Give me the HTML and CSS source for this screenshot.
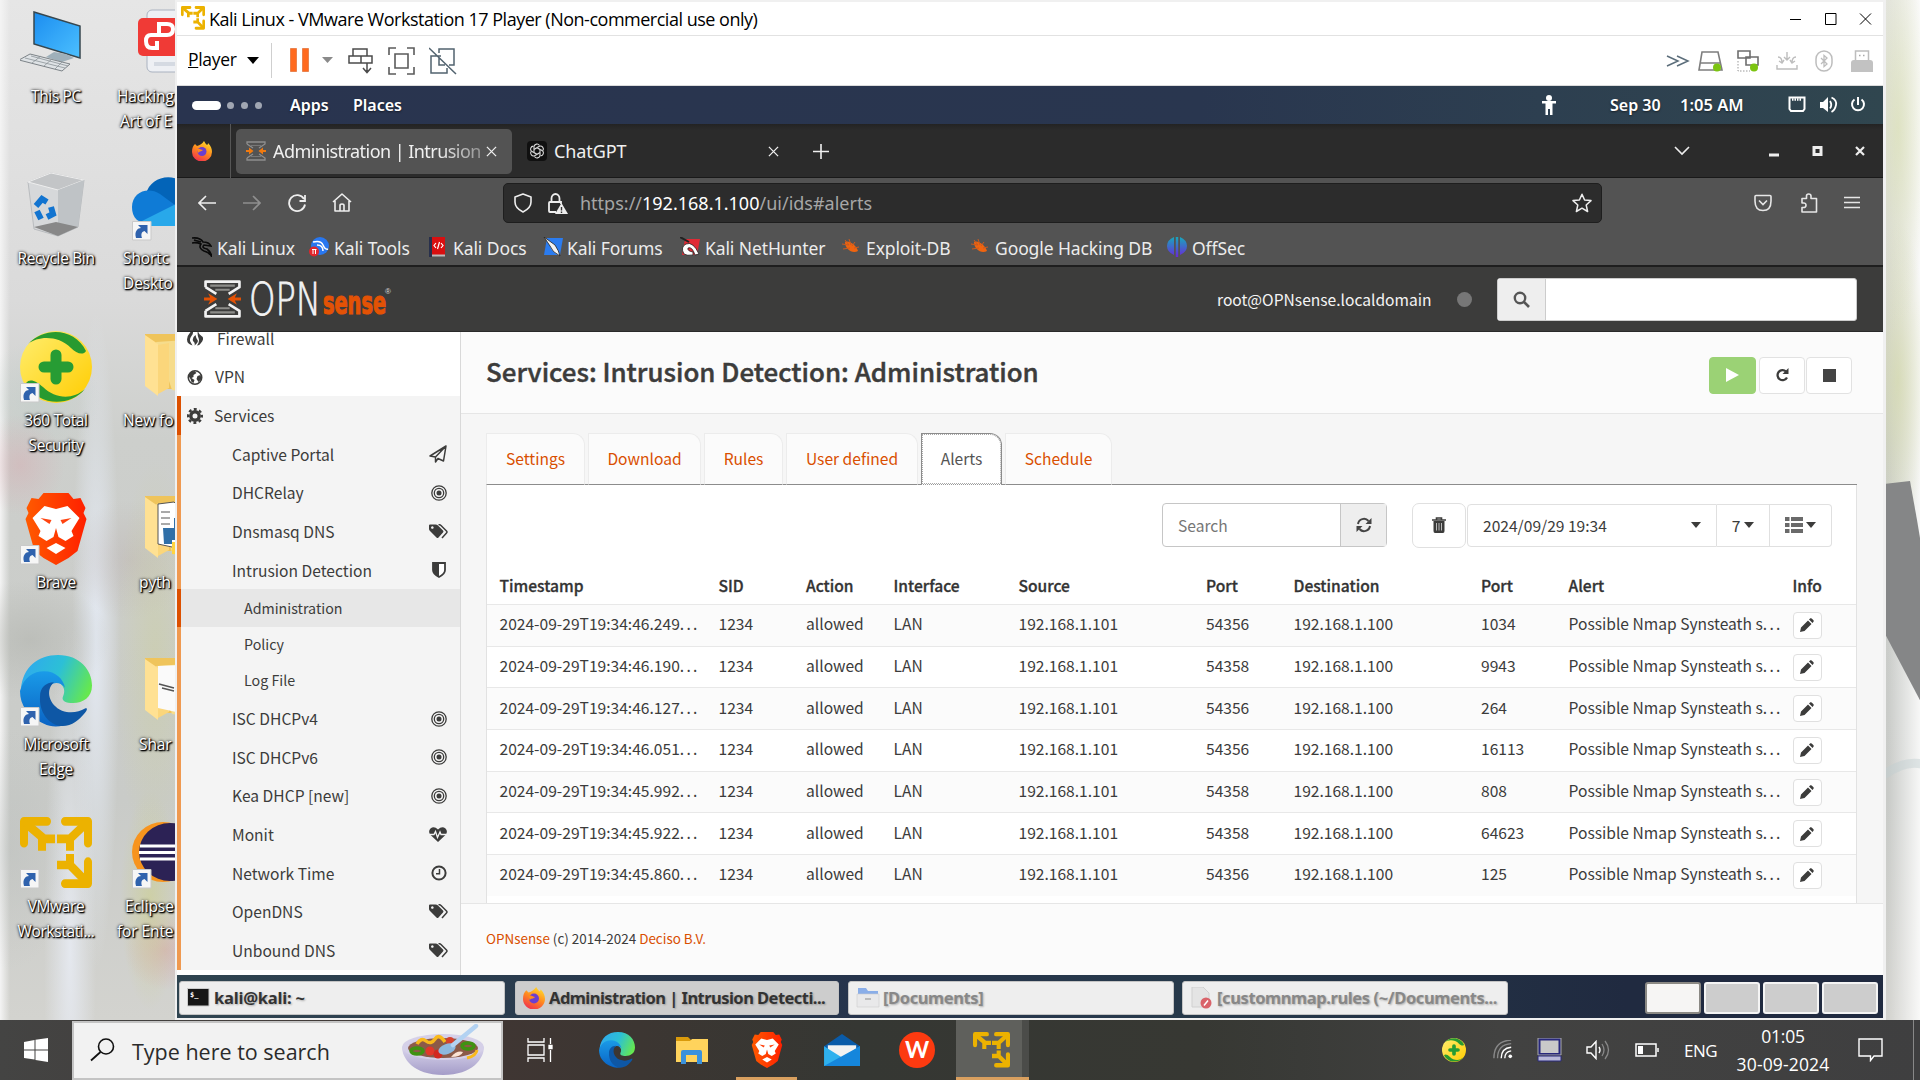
FILE: index.html
```html
<!DOCTYPE html>
<html lang="en">
<head>
<meta charset="utf-8">
<title>Administration | Intrusion Detection | Services</title>
<link rel="stylesheet" href="styles.css">
</head>
<body>
<svg class="defs" width="0" height="0">
  <defs>
    <linearGradient id="gBlue" x1="0" y1="0" x2="1" y2="1"><stop offset="0" stop-color="#1b8df0"/><stop offset="1" stop-color="#4cc0ff"/></linearGradient>
    <linearGradient id="gEdgeTop" x1="0" y1="0.3" x2="1" y2="0.6"><stop offset="0" stop-color="#2fa9ee"/><stop offset=".5" stop-color="#2cc0d6"/><stop offset="1" stop-color="#66e84e"/></linearGradient>
    <linearGradient id="gEdgeL" x1="0" y1="0" x2="0" y2="1"><stop offset="0" stop-color="#1a9be8"/><stop offset="1" stop-color="#0a63c4"/></linearGradient>
    <linearGradient id="gBrave" x1="0" y1="0" x2="1" y2="0"><stop offset="0" stop-color="#ff5a00"/><stop offset="1" stop-color="#ff2000"/></linearGradient>
    <linearGradient id="gYel" x1="0" y1="0" x2="1" y2="1"><stop offset="0" stop-color="#ffee70"/><stop offset="1" stop-color="#ffcc00"/></linearGradient>
    <linearGradient id="gBowl" x1="0" y1="0" x2="0" y2="1"><stop offset="0" stop-color="#d9d5ec"/><stop offset="1" stop-color="#a49cc8"/></linearGradient>
    <linearGradient id="gOff" x1="0" y1="0" x2="0" y2="1"><stop offset="0" stop-color="#18a8bc"/><stop offset="1" stop-color="#6a28d8"/></linearGradient>
    <linearGradient id="gFox" x1=".8" y1="0" x2=".3" y2="1"><stop offset="0" stop-color="#ffe02e"/><stop offset=".5" stop-color="#ff8a1e"/><stop offset="1" stop-color="#f0304e"/></linearGradient>
  </defs>
  <symbol id="vmware" viewBox="0 0 72 66" preserveAspectRatio="none"><g fill="none" stroke="#ecb200" stroke-width="8" stroke-linecap="round" stroke-linejoin="round"><path d="M27 4H4V24M45 4H68V24M68 41V61H45"/><g stroke-linecap="butt"><path d="M6 6L24 20H35M22 18V31M66 6L50 20H37M50 18V31M66 59L50 44V34M37 44H50"/></g></g></symbol>
  <symbol id="edge" viewBox="0 0 72 66" preserveAspectRatio="none"><path d="M1 31C3 11 18 0 38 0 60 0 72 14 72 28 72 39 63 44 53 44 46 44 41 42 43 38 45 34 45 30 40 26 30 18 10 18 1 31z" fill="url(#gEdgeTop)"/><path d="M0 33C4 20 14 15 24 15 36 15 43 22 45 30 38 22 27 26 27 36 26 50 38 60 50 62 43 66 32 67 24 63 8 57 0 46 0 33z" fill="url(#gEdgeL)"/><path d="M20 38C20 30 26 25 34 25 25 32 29 46 42 51 51 54 59 52 65 49 68 48 67 51 65 53 59 60 51 66 40 65 28 63 19 52 20 38z" fill="#0e57a5"/></symbol>
  <symbol id="brave" viewBox="0 0 61 72"><path d="M18 0H43L48 6 55 5 60 15 58 20 61 26 52 58 43 65 30.500 72 18 65 9 58 0 26 3 20 1 15 6 5 13 6z" fill="url(#gBrave)"/><path d="M30.500 16L42 13 54 25 46 38 48 43 40 48 33 44 30.500 35 28 44 21 48 13 43 15 38 7 25 19 13zM30.500 50L40 55 30.500 61 21 55z" fill="#fff"/><path d="M15 25L26 27 24 31zM46 25L35 27 37 31z" fill="#ff4410"/></symbol>
  <symbol id="total" viewBox="0 0 72 72"><circle cx="36" cy="36" r="36" fill="url(#gYel)"/><path d="M8 13C25-5 55-3 66 20 63 25 56 22 51 17 38 4 18 5 8 13zM65 58C50 76 18 76 6 52 10 47 16 50 23 56 35 68 53 69 65 58z" fill="#289a30"/><path d="M36 24V48M24 36H48" stroke="#279c34" stroke-width="11" stroke-linecap="round"/></symbol>
  <symbol id="folder" viewBox="0 0 72 66"><path d="M3 0H72V55H22L3 50z" fill="#efc45b"/><path d="M14 8L72 4V62L30 56z" fill="#f6dc8c"/><path d="M3 1L16 10V62L3 52z" fill="#ffe193"/><path d="M16 11L27 9V54L16 60z" fill="#fbd67b"/></symbol>
  <symbol id="shortcut" viewBox="0 0 20 20"><path d="M.5.500h18.500v18.500H.5z" fill="#f6f6f6" stroke="#c9c9c9"/><path d="M4 17C2 10 6 7 9 7L6 4H15.500V13L12.500 10C9 11 9 14 10 17z" fill="#2f62ad"/></symbol>
  <symbol id="firefox" viewBox="0 0 20 20"><path d="M12 0C13 2 14 3 15 4 16 3 16 3 16 2 19 5 20 8 20 11A10 9.500 0 0 1 0 11C0 7 1 5 3 3L5 5C8 4 10 3 12 0z" fill="url(#gFox)"/><circle cx="10" cy="10.500" r="4.500" fill="#6a3fd0"/><path d="M5 8C8 7 9 9 11 9 9 11 7 10 6 12z" fill="#ff8a1e"/></symbol>
  <symbol id="bug" viewBox="0 0 20 20"><path d="M4 5C8 3 15 8 17 14 11 17 4 12 4 5z" fill="#f0640f"/><path d="M1 7L8 8M2 12L9 11M8 2L10 8M14 5L11 9M18 10L13 11M4 3L8 8" stroke="#c95a20" stroke-width="1"/></symbol>
  <symbol id="opn" viewBox="0 0 36 37"><g fill="none" stroke="#f2f2f2" stroke-width="2.600" stroke-linejoin="round"><path d="M1.500 7V1.500H34.500V7L24 13.500M1.500 7L12 13.500M1.500 30V35.500H34.500V30L24 23.500M1.500 30L12 23.500"/><path d="M6 5.500H30M11 9.500H25M11 27.500H25M6 31.500H30" stroke="#8d8d8a" stroke-width="2"/></g><path d="M0 17H6L4 13 13 18.500 4 24 6 20H0zM36 17H30L32 13 23 18.500 32 24 30 20H36z" fill="#e35205"/></symbol>
  <symbol id="opnfav" viewBox="0 0 20 20"><path d="M1 3V1H19V3L13 7M1 3L7 7M1 17V19H19V17L13 13M1 17L7 13" fill="none" stroke="#8f8f8f" stroke-width="1.300"/><path d="M5 4.500H15M5 15.500H15" stroke="#777"/><path d="M0 9H3V6.500L7.500 10 3 13.500V11H0zM20 9H17V6.500L12.500 10 17 13.500V11H20z" fill="#f07a10"/></symbol>
  <symbol id="target" viewBox="0 0 16 16"><g fill="none" stroke="#3c3c3b" stroke-width="1.300"><circle cx="8" cy="8" r="7.200"/><circle cx="8" cy="8" r="4.700"/></g><circle cx="8" cy="8" r="2.500" fill="#3c3c3b"/></symbol>
  <symbol id="tags" viewBox="0 0 19 15"><path d="M0 1.500Q0 .5 1 .5H6.500Q8 .5 9 1.500L14 6.500Q15 7.500 14 8.500L9.500 13.500Q8.500 14.500 7.500 13.500L1 7Q0 6 0 5zM3.300 2.200A1.300 1.300 0 1 0 3.400 2.200z" fill="#3c3c3b" fill-rule="evenodd"/><path d="M9.500.5Q11 .5 12 1.500L17.500 7Q18.500 8 17.500 9L13 14" fill="none" stroke="#3c3c3b" stroke-width="1.500"/></symbol>
  <symbol id="pencil" viewBox="0 0 14 14"><path d="M0 14L1 9.500 8 2.500 11.500 6 4.500 13zM9 1.500L10.300.3Q11 0 11.700.5L13.500 2.300Q14 3 13.500 3.700L12.500 5z" fill="#3c3c3b"/></symbol>
  <symbol id="close" viewBox="0 0 12 12"><path d="M1 1L11 11M11 1L1 11" stroke="#f0f0f0" stroke-width="1.400"/></symbol>
</svg>

<main class="desktop">
  <section class="icons">
    <div class="column">
      <figure class="shortcut-tile">
        <svg class="art" viewBox="0 0 72 66"><path d="M14 2L60 16V48L14 34z" fill="url(#gBlue)" stroke="#37474f" stroke-width="1.500"/><path d="M34 42L46 44 54 48 42 52 26 47z" fill="#9fb0ba"/><path d="M10 44L50 54 42 61-1 50z" fill="#dfe3e6" stroke="#7d8388"/><path d="M5 48L45 58M11 46L48 56M12 53L21 46M24 56L32 49M35 59L42 52" stroke="#8c9398" stroke-width=".8"/></svg>
        <figcaption>This PC</figcaption>
      </figure>
      <figure class="shortcut-tile">
        <svg class="art" viewBox="0 0 72 66"><path d="M8 10L31 1 64 8 58 55 38 64 14 57z" fill="#d6d8da" stroke="#b9bcbf"/><path d="M8 10L38 18 64 8 31 1z" fill="#c3c5c7" stroke="#eee"/><path d="M38 18L64 8 58 55 38 64z" fill="#bfc3c6"/><path d="M14 55L36 50 58 55 38 64z" fill="#888"/><path d="M16 34L22 27 27 30M31 35L33 42 27 45M21 47L17 39" stroke="#1274d0" stroke-width="6" fill="none"/></svg>
        <figcaption>Recycle Bin</figcaption>
      </figure>
      <figure class="shortcut-tile">
        <svg class="art"><use href="#total"/></svg><svg class="arrow"><use href="#shortcut"/></svg>
        <figcaption>360 Total<br>Security</figcaption>
      </figure>
      <figure class="shortcut-tile">
        <svg class="art"><use href="#brave"/></svg><svg class="arrow"><use href="#shortcut"/></svg>
        <figcaption>Brave</figcaption>
      </figure>
      <figure class="shortcut-tile">
        <svg class="art"><use href="#edge"/></svg><svg class="arrow"><use href="#shortcut"/></svg>
        <figcaption>Microsoft<br>Edge</figcaption>
      </figure>
      <figure class="shortcut-tile">
        <svg class="art"><use href="#vmware"/></svg><svg class="arrow"><use href="#shortcut"/></svg>
        <figcaption>VMware<br>Workstati...</figcaption>
      </figure>
    </div>
    <div class="column second">
      <figure class="shortcut-tile">
        <svg class="art" viewBox="0 0 72 66"><rect x="15" y="0" width="60" height="62" rx="5" fill="#eef0f4" stroke="#aab2c0"/><rect x="6" y="8" width="60" height="38" rx="5" fill="#f03a36"/><path d="M26 24V14H34Q40 14 40 19Q40 25 34 25H18Q13 25 13 31Q13 38 19 38H24V31" transform="translate(1)" fill="none" stroke="#fff" stroke-width="4"/><path d="M22 54H60" stroke="#d5dae2" stroke-width="4"/></svg>
        <figcaption class="c-pdf">Hacking<br>Art of E</figcaption>
      </figure>
      <figure class="shortcut-tile">
        <svg class="art" viewBox="0 0 72 66"><path d="M14 22C18 4 44-2 56 16L72 20V46H18z" fill="#0364b8"/><path d="M0 35C0 20 16 14 28 22L50 38 20 52C6 52 0 46 0 35z" fill="#0f7bd6"/><path d="M8 50L44 32 72 24V54H16z" fill="#28a8ea"/></svg><svg class="arrow"><use href="#shortcut"/></svg>
        <figcaption class="c-cloud">Shortc<br>Deskto</figcaption>
      </figure>
      <figure class="shortcut-tile"><svg class="art fold"><use href="#folder"/></svg><figcaption class="c-new">New fo</figcaption></figure>
      <figure class="shortcut-tile">
        <svg class="art fold" viewBox="0 0 72 66"><use href="#folder"/><path d="M16 8L32 6 44 18V54L16 48z" fill="#fff" stroke="#555"/><path d="M19 16H28M19 22H28M19 28H28" stroke="#555"/><path d="M21 32H32V22H48V44H30V48H22z" fill="#2f6fa8"/><path d="M30 58V46H48V36H58V60z" fill="#ffd340"/></svg>
        <figcaption class="c-py">pyth</figcaption>
      </figure>
      <figure class="shortcut-tile">
        <svg class="art fold" viewBox="0 0 72 66"><use href="#folder"/><path d="M16 8L60 6V60L16 50z" fill="#fafafa"/><path d="M17 26L32 30M20 30L32 33" stroke="#555" stroke-width="1.500"/></svg>
        <figcaption class="c-py">Shar</figcaption>
      </figure>
      <figure class="shortcut-tile">
        <svg class="art" viewBox="0 0 72 66"><ellipse cx="31" cy="32" rx="31" ry="30" fill="#f7941e"/><ellipse cx="38" cy="32" rx="31" ry="29" fill="#2c2255"/><path d="M8 26H72M7 32.500H72M8 39H72" stroke="#fff" stroke-width="3"/></svg><svg class="arrow"><use href="#shortcut"/></svg>
        <figcaption class="c-ecl">Eclipse<br>for Ente</figcaption>
      </figure>
    </div>
  </section>

  <section class="window">
    <header class="titlebar">
      <svg width="24" height="24"><use href="#vmware"/></svg>
      <h1>Kali Linux - VMware Workstation 17 Player (Non-commercial use only)</h1>
      <svg class="wbtn" viewBox="0 0 35 12"><path d="M12 6.500H23" stroke="#000"/></svg>
      <svg class="wbtn" viewBox="0 0 35 12"><path d="M12.500.500H23v11H12.500z" fill="none" stroke="#000"/></svg>
      <svg class="wbtn" viewBox="0 0 35 12"><path d="M12 .5L23 11.500M23 .5L12 11.500" stroke="#000"/></svg>
    </header>

    <div class="toolbar">
      <span class="player"><u>P</u>layer</span>
      <svg width="12" height="8" viewBox="0 0 12 8"><path d="M0 0H12L6 7z"/></svg>
      <i class="rule"></i>
      <svg width="20" height="25" viewBox="0 0 20 25"><path d="M.5.500h6v23h-6zM12.500.500h6v23h-6z" fill="#ff6a1f" stroke="#e9834f"/></svg>
      <svg width="11" height="7" viewBox="0 0 11 7"><path d="M0 0H11L5.500 6z" fill="#8a8a8a"/></svg>
      <svg width="26" height="26" viewBox="0 0 26 26"><g fill="none" stroke="#4b4b4b" stroke-width="1.500"><path d="M5 1H19V8H5zM1 8H24V15H1zM13 8V15M19 15V24M15 20L19 24.500 23 20"/></g></svg>
      <svg width="28" height="28" viewBox="0 0 28 28"><path d="M7 7H20V21H7zM1 8V1H8M19 1H26V8M26 20V27H19M8 27H1V20" fill="none" stroke="#5b5b5b" stroke-width="1.600"/></svg>
      <svg width="28" height="28" viewBox="0 0 28 28"><path d="M10 6V2H25V18H20M12 9H2V26H18V21M10 11V18H16M0 1L27 27" fill="none" stroke="#52636f" stroke-width="1.500"/></svg>
      <svg width="24" height="24" viewBox="0 0 24 24"><path d="M1 7L12 12 1 17M11 7L22 12 11 17" fill="none" stroke="#5b6d7a" stroke-width="1.500"/></svg>
      <svg width="26" height="24" viewBox="0 0 26 24"><path d="M4 3H20L24 21H1zM2 14H22" fill="none" stroke="#7e7e7e" stroke-width="1.600"/><circle cx="19" cy="18.500" r="4" fill="#7cc411"/></svg>
      <svg width="26" height="24" viewBox="0 0 26 24"><path d="M3 2H15V9H3zM11 8H23V16H11z" fill="#fff" stroke="#6e6e6e" stroke-width="1.600"/><path d="M3 12V22H15" stroke="#999" stroke-dasharray="1.500" fill="none"/><circle cx="19" cy="18.500" r="4" fill="#7cc411"/></svg>
      <svg width="24" height="24" viewBox="0 0 24 24"><path d="M12 3V10M9 8L12 11 15 8M3 8Q7 8 7 14M4 12L7 14 9 11M21 8Q17 8 17 14M20 12L17 14 15 11M2 16V20H22V16" fill="none" stroke="#bdbdbd" stroke-width="1.400"/></svg>
      <svg width="24" height="24" viewBox="0 0 24 24"><rect x="4" y="2" width="16" height="20" rx="8" fill="none" stroke="#bdbdbd" stroke-width="1.500"/><path d="M9 9L15 15 12 17.500V6.500L15 9 9 15" fill="none" stroke="#bdbdbd" stroke-width="1.300"/></svg>
      <svg width="24" height="24" viewBox="0 0 24 24"><path d="M5.500 2H18.500V12H5.500z" fill="#fff" stroke="#bdbdbd" stroke-width="1.500"/><path d="M1 23V14Q1 11 4 11H20Q23 11 23 14V23z" fill="#c2c2c2"/><path d="M9 6.500H10.500M13 6.500H14.500" stroke="#aaa" stroke-width="1.500"/></svg>
    </div>

    <nav class="panel">
      <span class="pill"></span><span class="dot"></span><span class="dot"></span><span class="dot"></span>
      <b class="apps">Apps</b><b class="places">Places</b>
      <svg width="24" height="24" viewBox="0 0 24 24"><circle cx="12" cy="5" r="3" fill="#fff"/><path d="M5 8H19V10.500H15.500V22H13V16H11V22H8.500V10.500H5z" fill="#fff"/></svg>
      <b class="date">Sep 30</b><b class="clock">1:05 AM</b>
      <svg width="24" height="24" viewBox="0 0 24 24"><path d="M4.500 4.500H19.500V16L18 18H6L4.500 16z" fill="none" stroke="#fff" stroke-width="2"/><path d="M7 6.500H17" stroke="#fff" stroke-width="2.500" stroke-dasharray="1.500 1"/></svg>
      <svg width="24" height="24" viewBox="0 0 24 24"><path d="M4 9H7L12 4V19L7 15H4z" fill="#fff"/><path d="M14 8Q16.500 12 14 15.500M15.500 4.500Q21 7 20 12T15.500 19" stroke="#fff" stroke-width="1.800" fill="none"/></svg>
      <svg width="24" height="24" viewBox="0 0 24 24"><path d="M8.500 6.500A6 6 0 1 0 15.500 6.500M12 4V12" stroke="#fff" stroke-width="2" fill="none"/></svg>
    </nav>

    <div class="tabstrip">
      <svg width="20" height="20"><use href="#firefox"/></svg>
      <i class="rule"></i>
      <div class="tab"><svg width="20" height="20"><use href="#opnfav"/></svg><span>Administration | Intrusion</span><svg width="11" height="11"><use href="#close"/></svg></div>
      <svg width="20" height="20" viewBox="0 0 20 20"><rect width="20" height="20" rx="4" fill="#101010"/><g fill="none" stroke="#ddd" stroke-width="1.100"><path id="petal" d="M7 8V5.500A3 3 0 0 1 12.500 4.500"/><use href="#petal" transform="rotate(60 10 10)"/><use href="#petal" transform="rotate(120 10 10)"/><use href="#petal" transform="rotate(180 10 10)"/><use href="#petal" transform="rotate(240 10 10)"/><use href="#petal" transform="rotate(300 10 10)"/><path d="M10 6.700L13 8.400V11.600L10 13.300 7 11.600V8.400z"/></g></svg>
      <span class="gpt">ChatGPT</span>
      <svg width="11" height="11"><use href="#close"/></svg>
      <svg width="16" height="15" viewBox="0 0 16 15"><path d="M8 0V15M0 7.500H16" stroke="#f0f0f0" stroke-width="1.600"/></svg>
      <svg width="16" height="10" viewBox="0 0 16 10"><path d="M1 1L8 8 15 1" fill="none" stroke="#eee" stroke-width="1.600"/></svg>
      <svg width="10" height="12" viewBox="0 0 10 12"><path d="M0 10H10" stroke="#eee" stroke-width="3"/></svg>
      <svg width="11" height="12" viewBox="0 0 11 12"><path d="M2 2.500H9V9.500H2z" fill="none" stroke="#eee" stroke-width="3"/></svg>
      <svg width="10" height="10" viewBox="0 0 10 10"><path d="M1 1L9 9M9 1L1 9" stroke="#eee" stroke-width="2.200"/></svg>
    </div>

    <div class="navbar">
      <svg width="18" height="18" viewBox="0 0 18 18"><path d="M18 9H1M8 2L1 9 8 16" fill="none" stroke="#eee" stroke-width="1.600"/></svg>
      <svg width="18" height="18" viewBox="0 0 18 18"><path d="M0 9H17M10 2L17 9 10 16" fill="none" stroke="#8f8f8f" stroke-width="1.600"/></svg>
      <svg width="19" height="19" viewBox="0 0 19 19"><path d="M16 5A8 8 0 1 0 17 10.500M17 1V7H11.500" fill="none" stroke="#eee" stroke-width="1.800"/></svg>
      <svg width="20" height="20" viewBox="0 0 20 20"><path d="M1 9L10 1 19 9M3 8V18H17V8M8 18V12.500Q8 11 10 11T12 12.500V18" fill="none" stroke="#eee" stroke-width="1.600" stroke-linejoin="round"/></svg>
      <div class="urlbar">
        <svg width="18" height="20" viewBox="0 0 18 20"><path d="M9 1L17 4V9Q17 15 9 19Q1 15 1 9V4z" fill="none" stroke="#eee" stroke-width="1.600" stroke-linejoin="round"/></svg>
        <svg width="20" height="21" viewBox="0 0 20 21"><path d="M3.500 9V5.500A4 4.500 0 0 1 11.500 5.500V9M8 19H2Q1 19 1 18V10Q1 9 2 9H13V11" fill="none" stroke="#eee" stroke-width="1.800"/><path d="M13.500 10L20 21H7z" fill="#eee"/><path d="M13.500 14V17.500M13.500 18.500V20" stroke="#333" stroke-width="1.400"/></svg>
        <span>https://<em>192.168.1.100</em>/ui/ids#alerts</span>
        <svg width="20" height="20" viewBox="0 0 20 20"><path d="M10 1.200L12.600 7 19 7.600 14.200 12 15.600 18.500 10 15.200 4.400 18.500 5.800 12 1 7.600 7.400 7z" fill="none" stroke="#eee" stroke-width="1.500" stroke-linejoin="round"/></svg>
      </div>
      <svg width="18" height="18" viewBox="0 0 18 18"><path d="M2 1.500H16Q17 1.500 17 2.500V7Q17 16.500 9 16.500T1 7V2.500Q1 1.500 2 1.500zM5 6.500L9 10.500 13 6.500" fill="none" stroke="#e6e6e6" stroke-width="1.600"/></svg>
      <svg width="18" height="20" viewBox="0 0 18 20"><path d="M2 5.500H6.500V3Q6.500 1 8.700 1T11 3V5.500H16.500V19H2V14.500H3.500Q6 14.500 6 12.200T3.500 10H2z" fill="none" stroke="#e6e6e6" stroke-width="1.600" stroke-linejoin="round"/></svg>
      <svg width="16" height="14" viewBox="0 0 16 14"><path d="M0 1.500H16M0 6.500H16M0 11.500H16" stroke="#e6e6e6" stroke-width="1.400"/></svg>
    </div>

    <div class="bookmarks">
      <svg viewBox="0 0 20 20"><path d="M0 1Q8 0 11 5Q17 5 19 9L12 8Q9 11 15 12Q19 15 20 20Q17 15 12 14Q6 11 9 7Q4 5 0 6M2 3L9 5" fill="none" stroke="#0a0a0a" stroke-width="1.600"/></svg><span>Kali Linux</span>
      <svg viewBox="0 0 20 20"><circle cx="11" cy="9" r="9" fill="#2877f0"/><path d="M4 5Q12 3 14 8T19 12M8 8Q14 8 14 14" fill="none" stroke="#fff" stroke-width="1.500"/><circle cx="5" cy="14.500" r="5" fill="#e0262c"/><path d="M3 12.500H7.500M4 12.500V17M6.500 12.500V17" stroke="#fff"/></svg><span>Kali Tools</span>
      <svg viewBox="0 0 20 20"><path d="M0 0H3V20H0z" fill="#28304c"/><path d="M3 0H16V18H3z" fill="#d80f10"/><path d="M3 18.500H16" stroke="#bbb" stroke-width="2"/><path d="M7 6L5 8.500 7 11M12 6L14 8.500 12 11M10.500 5L8.500 12" stroke="#fff" fill="none" stroke-width="1.200"/></svg><span>Kali Docs</span>
      <svg viewBox="0 0 20 20"><path d="M4 1H20L17 18H1z" fill="#2b7cf0"/><path d="M1 0L12 8Q16 14 17 19Q9 15 7 9z" fill="#f3f3f3" stroke="#222" stroke-width=".8"/></svg><span>Kali Forums</span>
      <svg viewBox="0 0 20 20"><path d="M5 2H20L17 18H2z" fill="#e02a35"/><path d="M4 17Q0 10 6 7Q13 4 19 17L15 18Q12 9 8 11Q7 14 13 15V18Q7 19 4 17z" fill="#fff" stroke="#222" stroke-width=".8"/><path d="M0 0L9 5" stroke="#222" stroke-width="2"/></svg><span>Kali NetHunter</span>
      <svg><use href="#bug"/></svg><span>Exploit-DB</span>
      <svg><use href="#bug"/></svg><span>Google Hacking DB</span>
      <svg viewBox="0 0 20 20"><path d="M7 0V18Q0 15 0 9T7 0zM13 0V18Q20 15 20 9T13 0zM8.800 0H11.200V20H8.800z" fill="url(#gOff)"/></svg><span>OffSec</span>
    </div>

    <div class="opn-header">
      <svg class="mark"><use href="#opn"/></svg>
      <svg class="wordmark" viewBox="0 0 142 40"><text x="0" y="36" textLength="72" lengthAdjust="spacingAndGlyphs" class="w1">OPN</text><text x="74" y="35" textLength="63" lengthAdjust="spacingAndGlyphs" class="w2">sense</text><text x="136" y="15" class="w3">®</text></svg>
      <span class="user">root@OPNsense.localdomain</span>
      <i class="status"></i>
      <div class="menu-search"><span><svg width="17" height="17" viewBox="0 0 17 17"><circle cx="7" cy="7" r="5.200" fill="none" stroke="#555" stroke-width="2.400"/><path d="M11 11L16 16" stroke="#555" stroke-width="2.600"/></svg></span></div>
    </div>

    <div class="page">
      <aside class="sidebar">
        <a class="top first"><svg width="16" height="16" viewBox="0 0 16 16"><path d="M5.500 0Q7 3 4.500 6T3.500 12L5.500 15.500Q0 14 0 9.500T5.500 0zM7.500 15.500Q8.500 13 6 11Q5 7.500 8.500 5Q9 8 10.500 10T7.500 15.500zM11 0Q11 4 14.500 6T14 13Q12.500 15.500 10 15.500Q13 12 11.500 8T11 0z" fill="#3c3c3b"/></svg><span>Firewall</span></a>
        <a class="top"><svg width="15" height="15" viewBox="0 0 15 15"><circle cx="7.500" cy="7.500" r="6.700" fill="#fff" stroke="#3c3c3b" stroke-width="1.600"/><path d="M1 6L3 2 7 1 9 3 6 5 6 7 4 8 7 10 6 13 4 12 3 9zM10 6L13 5 14 9 11 12 9 9z" fill="#3c3c3b"/></svg><span>VPN</span></a>
        <a class="top current"><svg width="16" height="16" viewBox="0 0 16 16"><circle cx="8" cy="8" r="4.200" fill="none" stroke="#3c3c3b" stroke-width="3.400"/><circle cx="8" cy="8" r="6.800" fill="none" stroke="#3c3c3b" stroke-width="2.400" stroke-dasharray="2.900 2.440" stroke-dashoffset="1.400"/></svg><span>Services</span></a>
        <div class="group">
          <a class="item"><span>Captive Portal</span><svg width="18" height="18" viewBox="0 0 18 18"><path d="M1 11L17 1 14.500 16 9 13.500 6.500 17V12zM17 1L6.500 12" fill="none" stroke="#3c3c3b" stroke-width="1.500" stroke-linejoin="round"/></svg></a>
          <a class="item"><span>DHCRelay</span><svg width="16" height="16"><use href="#target"/></svg></a>
          <a class="item"><span>Dnsmasq DNS</span><svg class="tg" width="19" height="15"><use href="#tags"/></svg></a>
          <a class="item"><span>Intrusion Detection</span><svg class="sh" width="14" height="16" viewBox="0 0 14 16"><path d="M1 1H13V8Q13 12 7 15Q1 12 1 8z" fill="#fff" stroke="#3c3c3b" stroke-width="1.800"/><path d="M1 1H7V15Q1 12 1 8z" fill="#3c3c3b"/></svg></a>
          <a class="leaf active">Administration</a>
          <a class="leaf">Policy</a>
          <a class="leaf">Log File</a>
          <a class="item"><span>ISC DHCPv4</span><svg width="16" height="16"><use href="#target"/></svg></a>
          <a class="item"><span>ISC DHCPv6</span><svg width="16" height="16"><use href="#target"/></svg></a>
          <a class="item"><span>Kea DHCP [new]</span><svg width="16" height="16"><use href="#target"/></svg></a>
          <a class="item"><span>Monit</span><svg width="18" height="15" viewBox="0 0 18 15"><path d="M9 15L1 7.500Q-1 4 1.500 1.500 5-1.500 9 2.500 13-1.500 16.500 1.500 19 4 17 7.500z" fill="#3c3c3b"/><path d="M0 7.500H5L6.500 4.500 8.500 10.500 11 5 12 7.500H18" fill="none" stroke="#f4f4f4" stroke-width="1.300"/></svg></a>
          <a class="item"><span>Network Time</span><svg width="16" height="16" viewBox="0 0 16 16"><circle cx="8" cy="8" r="6.600" fill="none" stroke="#3c3c3b" stroke-width="2"/><path d="M8.500 4V8.700H5" fill="none" stroke="#3c3c3b" stroke-width="1.500"/></svg></a>
          <a class="item"><span>OpenDNS</span><svg class="tg" width="19" height="15"><use href="#tags"/></svg></a>
          <a class="item"><span>Unbound DNS</span><svg class="tg" width="19" height="15"><use href="#tags"/></svg></a>
        </div>
      </aside>

      <section class="content">
        <header class="page-head">
          <h2>Services: Intrusion Detection: Administration</h2>
          <div class="service">
            <span class="play"><svg width="13" height="14" viewBox="0 0 13 14"><path d="M0 0L13 7 0 14z" fill="#fff"/></svg></span>
            <span><svg width="14" height="14" viewBox="0 0 14 14"><path d="M11 3.500A5 5 0 1 0 12 9.500" fill="none" stroke="#3c3c3b" stroke-width="2.300"/><path d="M13.500 0V6H7.500z" fill="#3c3c3b"/></svg></span>
            <span><svg width="13" height="13" viewBox="0 0 13 13"><path d="M0 0H13V13H0z" fill="#444"/></svg></span>
          </div>
        </header>
        <nav class="tabs"><a>Settings</a><a>Download</a><a>Rules</a><a>User defined</a><a class="on">Alerts</a><a>Schedule</a></nav>
        <div class="grid-panel">
          <div class="actions">
            <div class="search"><span>Search</span><i><svg width="16" height="16" viewBox="0 0 16 16"><path d="M2 7A6 6 0 0 1 12.500 4M14 9A6 6 0 0 1 3.500 12" fill="none" stroke="#444" stroke-width="2"/><path d="M15.500 1V7H9.500zM.5 15V9H6.500z" fill="#444"/></svg></i></div>
            <div class="trash"><svg width="14" height="16" viewBox="0 0 14 16"><path d="M0 3H14M4.500 2.500V1H9.500V2.500" stroke="#3c3c3b" stroke-width="1.600" fill="none"/><path d="M1.500 4H12.500V14Q12.500 16 11 16H3Q1.500 16 1.500 14z" fill="#3c3c3b"/><path d="M4.500 6V13.500M7 6V13.500M9.500 6V13.500" stroke="#bbb"/></svg></div>
            <div class="select"><span>2024/09/29 19:34</span><b class="caret"></b></div>
            <div class="rows"><span>7</span><b class="caret"></b></div>
            <div class="cols"><svg width="18" height="16" viewBox="0 0 18 16"><path d="M0 0H4.500V4H0zM6 0H18V4H6zM0 6H4.500V10H0zM6 6H18V10H6zM0 12H4.500V16H0zM6 12H18V16H6z" fill="#6a6a6a"/></svg><b class="caret"></b></div>
          </div>
          <div class="row head"><span>Timestamp</span><span>SID</span><span>Action</span><span>Interface</span><span>Source</span><span>Port</span><span>Destination</span><span>Port</span><span>Alert</span><span>Info</span></div>
          <div class="row odd"><span>2024-09-29T19:34:46.249<q>...</q></span><span>1234</span><span>allowed</span><span>LAN</span><span>192.168.1.101</span><span>54356</span><span>192.168.1.100</span><span>1034</span><span>Possible Nmap Synsteath s<q>...</q></span><i><svg width="14" height="14"><use href="#pencil"/></svg></i></div>
          <div class="row"><span>2024-09-29T19:34:46.190<q>...</q></span><span>1234</span><span>allowed</span><span>LAN</span><span>192.168.1.101</span><span>54358</span><span>192.168.1.100</span><span>9943</span><span>Possible Nmap Synsteath s<q>...</q></span><i><svg width="14" height="14"><use href="#pencil"/></svg></i></div>
          <div class="row odd"><span>2024-09-29T19:34:46.127<q>...</q></span><span>1234</span><span>allowed</span><span>LAN</span><span>192.168.1.101</span><span>54356</span><span>192.168.1.100</span><span>264</span><span>Possible Nmap Synsteath s<q>...</q></span><i><svg width="14" height="14"><use href="#pencil"/></svg></i></div>
          <div class="row"><span>2024-09-29T19:34:46.051<q>...</q></span><span>1234</span><span>allowed</span><span>LAN</span><span>192.168.1.101</span><span>54356</span><span>192.168.1.100</span><span>16113</span><span>Possible Nmap Synsteath s<q>...</q></span><i><svg width="14" height="14"><use href="#pencil"/></svg></i></div>
          <div class="row odd"><span>2024-09-29T19:34:45.992<q>...</q></span><span>1234</span><span>allowed</span><span>LAN</span><span>192.168.1.101</span><span>54358</span><span>192.168.1.100</span><span>808</span><span>Possible Nmap Synsteath s<q>...</q></span><i><svg width="14" height="14"><use href="#pencil"/></svg></i></div>
          <div class="row"><span>2024-09-29T19:34:45.922<q>...</q></span><span>1234</span><span>allowed</span><span>LAN</span><span>192.168.1.101</span><span>54358</span><span>192.168.1.100</span><span>64623</span><span>Possible Nmap Synsteath s<q>...</q></span><i><svg width="14" height="14"><use href="#pencil"/></svg></i></div>
          <div class="row odd"><span>2024-09-29T19:34:45.860<q>...</q></span><span>1234</span><span>allowed</span><span>LAN</span><span>192.168.1.101</span><span>54356</span><span>192.168.1.100</span><span>125</span><span>Possible Nmap Synsteath s<q>...</q></span><i><svg width="14" height="14"><use href="#pencil"/></svg></i></div>
        </div>
        <footer><a>OPNsense</a> (c) 2014-2024 <a>Deciso B.V.</a></footer>
      </section>
    </div>

    <div class="dock">
      <div class="task"><svg width="23" height="19" viewBox="0 0 23 19"><path d="M.5.500H22V18H.5z" fill="#161616" stroke="#ccc"/><text x="3" y="9" class="prompt">$_</text></svg><b>kali@kali: ~</b></div>
      <div class="task focus"><svg width="22" height="22"><use href="#firefox"/></svg><b>Administration | Intrusion Detecti...</b></div>
      <div class="task dim"><svg width="24" height="20" viewBox="0 0 24 20"><path d="M2 0H10L12 3H22V8H2z" fill="#8aaee8"/><path d="M1 6H23V19H1z" fill="#e9e9ea" stroke="#ccc" stroke-width=".6"/><path d="M9 11H15" stroke="#bbb" stroke-width="2"/></svg><b>[Documents]</b></div>
      <div class="task dim"><svg width="24" height="22" viewBox="0 0 24 22"><path d="M2 0H13L19 6V20H2z" fill="#e4e4e4" stroke="#d0d0d0"/><circle cx="16" cy="16" r="5.500" fill="#d9636a"/><path d="M14 18.500L18 13.500" stroke="#fff" stroke-width="1.500"/></svg><b>[customnmap.rules (~/Documents...</b></div>
      <i class="ws here"></i><i class="ws"></i><i class="ws"></i><i class="ws"></i>
    </div>
  </section>
  <svg class="slab" width="34" height="1020" viewBox="0 0 34 1020"><path d="M-2 484L24 481 31 520 36 550V704L-2 632z" fill="#858687"/><path d="M-2 775Q18 760 36 764" fill="none" stroke="#c2ced0" stroke-width="9" opacity=".45"/></svg>
</main>

<footer class="taskbar">
  <svg class="start" width="24" height="24" viewBox="0 0 24 24"><path d="M0 4L10.500 2V11.500H0zM11.500 1.800L24 0V11.500H11.500zM0 12.500H10.500V21.500L0 20zM11.500 12.500H24V24L11.500 22z" fill="#fff"/></svg>
  <div class="win-search">
    <svg width="25" height="24" viewBox="0 0 25 24"><circle cx="16" cy="8.500" r="7.500" fill="none" stroke="#111" stroke-width="1.600"/><path d="M10.500 14L1 22.500" stroke="#111" stroke-width="1.800"/></svg>
    <span>Type here to search</span>
    <svg width="84" height="52" viewBox="0 0 84 52"><path d="M1 23C1 34 12 51 42 51S83 34 83 23z" fill="url(#gBowl)"/><ellipse cx="42" cy="23" rx="41" ry="13" fill="#d5d0e8"/><ellipse cx="42" cy="24" rx="35" ry="10" fill="#8c5a48"/><path d="M16 20Q20 13 25 17T34 15T44 18" fill="none" stroke="#f9b91c" stroke-width="3.500"/><path d="M66 34Q75 32 76 26" fill="none" stroke="#f9b91c" stroke-width="3"/><g fill="none" stroke="#3f9212" stroke-width="3.500"><ellipse cx="16" cy="27" rx="6" ry="3"/><ellipse cx="67" cy="22" rx="6" ry="3"/></g><circle cx="29" cy="27" r="4.500" fill="#e2382a"/><circle cx="37" cy="30" r="4.500" fill="#d2281f"/><circle cx="49" cy="17" r="4" fill="#d5412e"/><path d="M50 33Q56 26 62 28Q60 33 50 33z" fill="#fbe3d4"/><ellipse cx="46" cy="25" rx="9" ry="5" fill="#8db8de" transform="rotate(-20 46 25)"/><path d="M52 21L75 2" stroke="#b3d2f2" stroke-width="4.500" stroke-linecap="round"/></svg>
  </div>
  <svg class="view" width="26" height="24" viewBox="0 0 26 24"><g fill="none" stroke="#fff" stroke-width="1.300"><path d="M1 0V4H17V0M1 7H17V17H1zM1 24V20H17V24M23.500 0V6M23.500 12V24"/><path d="M22 7.500H25V10.500H22z" fill="#fff"/></g></svg>
  <div class="slot"><svg width="36" height="36"><use href="#edge"/></svg></div>
  <div class="slot"><svg width="34" height="28" viewBox="0 0 34 28"><path d="M1 5V1H13L16 4V8H1z" fill="#d99a0b"/><path d="M1 5H15L17 3H33V26H1z" fill="#ffd35c"/><path d="M6 28V16Q6 14 8 14H25Q27 14 27 16V28H22V19H11V28z" fill="#3b92dc"/></svg></div>
  <div class="slot running"><svg width="32" height="36"><use href="#brave"/></svg></div>
  <div class="slot"><svg width="36" height="34" viewBox="0 0 38 36"><path d="M0 14L19 1 38 14V24H0z" fill="#0a5ba8"/><path d="M4 13H34V26H4z" fill="#f2f2f2"/><path d="M0 14L19 26 38 14V35H0z" fill="#2fb1ee"/><path d="M0 35L38 14V35z" fill="#1586dc"/></svg></div>
  <div class="slot"><svg width="36" height="36" viewBox="0 0 36 36"><circle cx="18" cy="18" r="18" fill="#fc3a10"/><text x="18" y="26" class="wps">W</text></svg></div>
  <div class="slot running open"><svg width="37" height="36"><use href="#vmware"/></svg></div>
  <div class="tray">
    <svg width="24" height="24"><use href="#total"/></svg>
    <svg width="20" height="20" viewBox="0 0 22 22"><g fill="none" stroke="#fff" stroke-width="1.500"><path d="M13 20Q13 13 20 12M9 20Q9 9 20 8"/><path d="M5 20Q5 5 20 4M1 20Q1 1 20 0" stroke="#888"/></g><circle cx="19" cy="18" r="2" fill="#fff"/></svg>
    <svg width="25" height="24" viewBox="0 0 25 24"><path d="M1 0H24V17H1z" fill="#28287c" stroke="#aaa"/><path d="M3.500 2.500H21.500V15H3.500z" fill="#c9c9c9"/><path d="M1 18H24V23H1z" fill="#b9b9d8" stroke="#28287c"/></svg>
    <svg width="24" height="20" viewBox="0 0 24 20"><path d="M1 7H5L10 1.500V18.500L5 13H1zM13 7Q15 10 13 13" fill="none" stroke="#fff" stroke-width="1.400"/><path d="M16 4Q20 10 16 16M19 1Q26 10 19 19" fill="none" stroke="#888" stroke-width="1.300"/></svg>
    <svg width="24" height="14" viewBox="0 0 24 14"><path d="M1 1H21V13H1zM23 5V9" fill="none" stroke="#fff" stroke-width="1.500"/><path d="M3 3H8V11H3z" fill="#fff"/></svg>
    <span class="lang">ENG</span>
    <div class="time"><span>01:05</span><span>30-09-2024</span></div>
    <svg width="25" height="24" viewBox="0 0 25 24"><path d="M1 1H24V18H16L12.500 22.500V18H1z" fill="none" stroke="#fff" stroke-width="1.400"/></svg>
    <i class="peek"></i>
  </div>
</footer>
</body>
</html>
```
FILE: styles.css
```css
* { box-sizing: border-box; }
body {
  margin: 0; width: 1920px; height: 1080px; overflow: hidden;
  display: flex; flex-direction: column;
  font-family: "Noto Sans", "Open Sans", sans-serif;
  background: #d8d9d8;
}
svg { display: block; flex: none; }
svg.defs { position: absolute; }
i, em, b { font-style: normal; }
figure, h1, h2 { margin: 0; }
a { color: inherit; text-decoration: none; }

/* desktop */
.desktop {
  height: 1020px; display: grid; grid-template-columns: 175px 1711px 34px;
  background:
    radial-gradient(45px 50px at 20px 465px, rgba(215,165,172,.4), transparent),
    radial-gradient(60px 60px at 40px 400px, rgba(190,205,200,.5), transparent),
    radial-gradient(30px 110px at 150px 900px, rgba(205,208,130,.5), transparent),
    radial-gradient(40px 40px at 165px 950px, rgba(215,160,165,.5), transparent),
    radial-gradient(40px 200px at 155px 660px, rgba(205,208,140,.35), transparent),
    radial-gradient(60px 60px at 130px 560px, rgba(190,182,180,.5), transparent),
    radial-gradient(80px 60px at 30px 640px, rgba(176,178,172,.55), transparent),
    radial-gradient(60px 120px at 10px 850px, rgba(184,188,186,.4), transparent),
    radial-gradient(30px 200px at 1898px 130px, rgba(215,222,170,.6), transparent),
    radial-gradient(30px 160px at 1898px 380px, rgba(210,216,160,.6), transparent),
    linear-gradient(90deg, transparent 1888px, rgba(255,255,255,.85) 1920px),
    radial-gradient(24px 330px at 96px 640px, rgba(230,236,246,.9), transparent),
    radial-gradient(26px 330px at 70px 950px, rgba(232,236,244,.85), transparent),
    linear-gradient(90deg, #f4f4f4, transparent 10px),
    linear-gradient(#e6e6e6, #dadada 300px, #cdcfcc 440px, #c9cbc8 800px, #d3d3cf);
}
.slab { filter: blur(.7px); overflow: hidden; }
.icons { display: flex; overflow: hidden; }
.column { width: 112px; flex: none; }
.shortcut-tile { height: 162px; padding-top: 4px; display: grid; grid-template: 80px auto / 72px; justify-content: center; align-items: start; }
.shortcut-tile .art { grid-area: 1 / 1; width: 72px; height: 72px; margin-top: 3px; }
.shortcut-tile .arrow { grid-area: 1 / 1; width: 20px; height: 20px; align-self: end; margin-bottom: 5px; }
.shortcut-tile .fold { margin-left: 10px; }
.shortcut-tile figcaption {
  justify-self: center; text-align: center; white-space: nowrap; line-height: 25px; font-size: 15.500px; letter-spacing: -.35px;
  font-family: "Open Sans", sans-serif; color: #fff; text-shadow: 1px 1px 2px #000, 0 0 3px #000, 1px 1px 1px #000;
}
.second figcaption { justify-self: start; text-align: left; letter-spacing: -.1px; }
.second .c-pdf { margin-left: -12px; text-indent: -3px; }
.second .c-cloud, .second .c-new { margin-left: -9px; }
.second .c-py { margin-left: 7px; }
.second .c-ecl { margin-left: -15px; text-indent: 8px; }

/* virtual machine window */
.window { background: #f0f0f0; padding: 2px 3px 2px 2px; color: #000; }
.titlebar { height: 34px; background: #fff; border-bottom: 1px solid #e2e2e2; display: grid; grid-template-columns: 28px 1569px 35px 35px 35px; align-items: center; padding: 0 0 0 4px; }
.titlebar > svg:first-child { margin-top: -1px; }
.titlebar h1 { font: 400 18px "Open Sans", sans-serif; white-space: nowrap; letter-spacing: -.49px; }
.wbtn { width: 35px; height: 12px; }
.toolbar { height: 50px; background: #fff; border-bottom: 1px solid #dcdcdc; display: grid; align-items: center;
  grid-template-columns: 59px 24px 19px 32px 26px 40px 41px 1237px 32px 37px 40px 37px 38px 24px; padding-left: 11px; }
.player { font: 17.500px "Open Sans", sans-serif; letter-spacing: -.3px; padding-bottom: 3px; }
.toolbar .rule { width: 1px; height: 35px; background: #cfcfcf; }

.panel { height: 38px; color: #fff; display: grid; align-items: center; padding-left: 15px;
  background: linear-gradient(90deg, #29344f, #29364f 60%, #2d3f50 80%, #30464f);
  grid-template-columns: 35px 14px 14px 35px 63px 1184px 73px 70px 105px 31px 30px 24px; font-size: 16px; line-height: 22px; }
.panel b { font-weight: 600; white-space: nowrap; text-shadow: 0 1px 2px #0008; }
.panel .clock { font-size: 16.500px; }
.pill { width: 29px; height: 9px; border-radius: 5px; background: #fff; }
.dot { width: 7px; height: 7px; border-radius: 50%; background: #a0a6b2; }

.tabstrip { height: 54px; background: linear-gradient(#232323, #2b2b2b 6px); border-bottom: 1px solid #191919; display: grid; align-items: center; color: #f0f0f0; font-size: 18px;
  grid-template-columns: 38px 6px 291px 27px 214px 45px 861px 95px 43px 43px 10px; padding-left: 15px; }
.tabstrip .rule { width: 1px; height: 54px; background: #565656; }
.gpt { letter-spacing: -.1px; }
.tab { width: 276px; height: 45px; border-radius: 5px; background: #535353; display: grid; grid-template-columns: 27px 213px 11px; align-items: center; padding-left: 10px; }
.tab span { white-space: nowrap; width: 210px; letter-spacing: -.55px; -webkit-mask-image: linear-gradient(90deg, #000 165px, #0006 208px); mask-image: linear-gradient(90deg, #000 165px, #0006 208px); }
.navbar { height: 50px; background: #535353; display: grid; align-items: center; padding-left: 21px;
  grid-template-columns: 45px 45px 44px 171px 1251px 46px 44px 16px; }
.urlbar { width: 1099px; height: 40px; background: #2c2c2c; border: 1px solid #1e1e1e; border-radius: 5px; display: grid; align-items: center; padding-left: 10px; color: #a6a6a6; font-size: 18px; grid-template-columns: 34px 32px 992px 20px; }
.urlbar em { color: #fff; }
.bookmarks { height: 39px; background: #535353; border-bottom: 2px solid #1e1e1e; display: grid; align-items: center; color: #ececec; font-size: 17.500px; letter-spacing: -.1px; white-space: nowrap; padding-left: 15px; padding-top: 3px;
  grid-template-columns: 25px 92px 25px 95px 24px 90px 24px 113px 25px 136px 25px 104px 25px 172px 25px 80px; }
.bookmarks svg { width: 20px; height: 20px; margin-top: -3px; }

/* OPNsense */
.opn-header { height: 65px; background: #3c3c3b; display: grid; align-items: center; padding-left: 27px; border-bottom: 1px solid #2a2a2a;
  grid-template-columns: 45px 968px 240px 40px 360px; font-family: "Noto Sans CJK SC", sans-serif; }
.mark { width: 37px; height: 38px; }
.wordmark { width: 142px; height: 40px; overflow: visible; }
.w1 { font: 200 45px "DejaVu Sans", sans-serif; fill: #f2f2f2; stroke: #f2f2f2; stroke-width: .8px; }
.w2 { font: 700 32px "DejaVu Sans Condensed", sans-serif; fill: #e35205; stroke: #e35205; stroke-width: 1.200px; }
.w3 { font: 8px "Liberation Sans", sans-serif; fill: #ddd; }
.user { color: #f4f4f4; font-size: 15.600px; white-space: nowrap; }
.status { width: 15px; height: 15px; border-radius: 50%; background: #777; }
.menu-search { height: 43px; background: #fff; border: 1px solid #ccc; border-radius: 3px; }
.menu-search span { width: 48px; height: 41px; background: #eee; border-right: 1px solid #ccc; display: flex; align-items: center; justify-content: center; }

.page { height: 643px; display: flex; background: #fff; font-family: "Noto Sans CJK SC", sans-serif; color: #3c3c3b; overflow: hidden; }
.sidebar { width: 284px; border-right: 1px solid #d9d9d9; font-size: 15.600px; flex: none; }
.top { height: 38.700px; display: flex; align-items: center; padding-left: 10px; gap: 12px; }
.top svg { flex: 0 0 16px; }
.top span { padding-bottom: 2px; }
.item span { padding-bottom: 1px; }
.first { margin-top: -13px; }
.first span { padding: 0 0 0 2px; }
.current { background: #f4f4f4; border-left: 4px solid #dc5000; padding-left: 6px; }
.current span { margin-left: -1px; }
.group { background: #f4f4f4; border-left: 4px solid #ef9950; }
.item { height: 38.600px; display: flex; align-items: center; justify-content: space-between; padding: 0 12px 0 51px; }
.item svg { margin-right: 1px; }
.item .tg { margin-right: 0; }
.item .sh { margin-right: 2px; }
.leaf { height: 36px; display: flex; align-items: center; padding: 0 0 3px 63px; font-size: 14.250px; }
.active { height: 38px; padding-bottom: 1px; background: #e7e7e7; border-left: 4px solid #dc5000; margin-left: -4px; }

.content { flex: 1; background: #f6f6f6; display: flex; flex-direction: column; font-size: 15.600px; }
.page-head { height: 82px; background: #fbfbfb; border-bottom: 1px solid #e6e6e6; display: flex; justify-content: space-between; align-items: center; padding: 0 31px 0 25px; flex: none; }
.page-head h2 { font-size: 25.900px; font-weight: 500; white-space: nowrap; -webkit-text-stroke: .45px #3c3c3b; padding-bottom: 4px; }
.service { display: flex; gap: 1px; margin-top: 5px; }
.service span { width: 46px; height: 37px; border: 1px solid #e2e2e2; border-radius: 4px; background: #fff; display: flex; align-items: center; justify-content: center; }
.service .play { width: 47px; background: #9bd275; border-color: #9bd275; margin-right: 2px; }
.tabs { height: 71px; padding: 19px 0 0 25px; display: grid; grid-template-columns: 102px 116px 82px 135px 84px 110px; flex: none; background: linear-gradient(#8c8c8c, #8c8c8c) 25px 70px / 1371px 1px no-repeat; }
.tabs a { height: 52px; margin-right: 3px; border: 1px solid #ececec; border-bottom: 1px solid #8c8c8c; border-radius: 0 12px 0 0; background: #fbfbfb; color: #d94f00; display: flex; align-items: center; justify-content: center; white-space: nowrap; padding-bottom: 3px; }
.tabs .on { background: #fff; color: #555; border: 1px solid #8c8c8c; border-bottom: 1px dotted #999; outline: 1px dotted #aaa; outline-offset: -2px; margin-right: 3px; }
.grid-panel { margin: 0 26px 0 25px; height: 418px; background: #fff; border: 1px solid #e2e2e2; border-width: 0 1px; flex: none; }
.actions { height: 80px; display: grid; align-items: center; padding-left: 675px; grid-template-columns: 250px 55px 250px 53px 62px; }
.actions > div { height: 43px; display: flex; align-items: center; border: 1px solid #e0e0e0; }
.actions span { padding-bottom: 1px; }
.actions .search { width: 225px; height: 44px; border: 1px solid #c6c6c6; border-radius: 4px; color: #767676; padding-left: 15px; justify-content: space-between; }
.search i { width: 46px; height: 42px; background: #eee; border-left: 1px solid #c6c6c6; display: flex; align-items: center; justify-content: center; }
.actions .trash { height: 45px; width: 54px; border-radius: 7px; justify-content: center; }
.select { justify-content: space-between; padding: 0 15px; border-radius: 4px 0 0 4px; }
.actions .rows, .actions .cols { justify-content: center; gap: 4px; border-left: 0; }
.actions .cols { border-radius: 0 4px 4px 0; gap: 3px; }
.caret { border: 5px solid transparent; border-top: 6px solid #3c3c3b; border-bottom: 0; }
.row { height: 41.700px; display: grid; grid-template-columns: 219px 87.500px 87.500px 125px 187.500px 87.500px 187.500px 87.500px 224px 60px; align-items: center; padding-left: 12.500px; white-space: nowrap; border-top: 1px solid #e8e8e8; }
.row.head { height: 39px; font-weight: 500; border-top: 0; color: #333; -webkit-text-stroke: .3px #333; }
.row.odd { background: #fbfbfb; }
.row span { padding-bottom: 4px; }
.row.head span { padding-bottom: 0; }
.row i { width: 29px; height: 27px; border: 1px solid #e0e0e0; border-radius: 4px; background: #fff; display: flex; align-items: center; justify-content: center; }
q { quotes: none; letter-spacing: 2.300px; }
.content footer { flex: 1; background: #fbfbfb; border-top: 1px solid #e6e6e6; padding-left: 25px; font-size: 13.450px; line-height: 68px; }
.content footer a { color: #d94f00; }

.dock { height: 43px; background: linear-gradient(90deg, #2f4450, #26344c 40%, #26394a 60%, #202a40 85%); display: grid; align-items: center; padding: 2px 0 0 2px;
  grid-template-columns: 336px 333px 334px 463px 59px 59px 59px 56px; }
.task { width: 326px; height: 34px; background: #eee; border: 1px solid #c4c4c4; border-radius: 3px; display: flex; align-items: center; gap: 4px; padding-left: 7px; color: #333; font-size: 16.500px; white-space: nowrap; }
.task b { text-shadow: 1px 1px 2px #0004; letter-spacing: -.2px; }
.focus { background: #cdcdcd; width: 324px; }
.focus b { letter-spacing: -.54px; }
.dim { color: #888; gap: 3px; }
.dim b { letter-spacing: -.4px; }
.prompt { font: 700 7px "DejaVu Sans Mono", monospace; fill: #fff; }
.ws { width: 56px; height: 32px; background: #cdcdcd; border: 2px solid #f4f4f4; border-radius: 3px; }
.here { background: #f6f5f4; border-color: #8b8984; }

/* host taskbar */
.taskbar { height: 60px; background: linear-gradient(90deg, #444443, #3f3633 500px, #3c3632 640px, #353733 860px, #373833 1200px, #3a3b38 1300px, #424241 1500px, #3f3f40); display: grid; align-items: center; color: #fff;
  font-family: "Open Sans", sans-serif; grid-template-columns: 72px 455px 52px 75px 75px 75px 75px 75px 69px 1fr; }
.start { justify-self: center; }
.win-search { width: 431px; height: 59px; background: #f2f2f2; border: 2px solid #c4c4c4; display: grid; grid-template-columns: 42px 269px 84px; align-items: center; padding-left: 16px; color: #2b2b2b; font-size: 21.500px; white-space: nowrap; }
.win-search span { padding-top: 2px; }
.slot { height: 60px; display: flex; align-items: center; justify-content: center; }
.running { border-bottom: 3px solid #d9a05f; padding-top: 3px; margin: 0 7px; }
.open { background: linear-gradient(90deg, #5f605c 66px, #4b4c49 66px); margin: 0 -6px 0 2px; }
.open svg { margin-right: 2px; }
.wps { font: 700 23px "Lato", sans-serif; fill: #fff; text-anchor: middle; }
.tray { display: grid; align-items: center; justify-content: end; grid-template-columns: 51px 44px 49px 49px 49px 46px 128px 55px 7px; }
.lang { font-size: 17px; letter-spacing: -.5px; }
.time { display: flex; flex-direction: column; align-items: center; width: 106px; line-height: 28px; font-size: 17.500px; letter-spacing: .15px; }
.time span:first-child { letter-spacing: -.2px; }
.peek { width: 1px; height: 60px; background: #888; }
```
